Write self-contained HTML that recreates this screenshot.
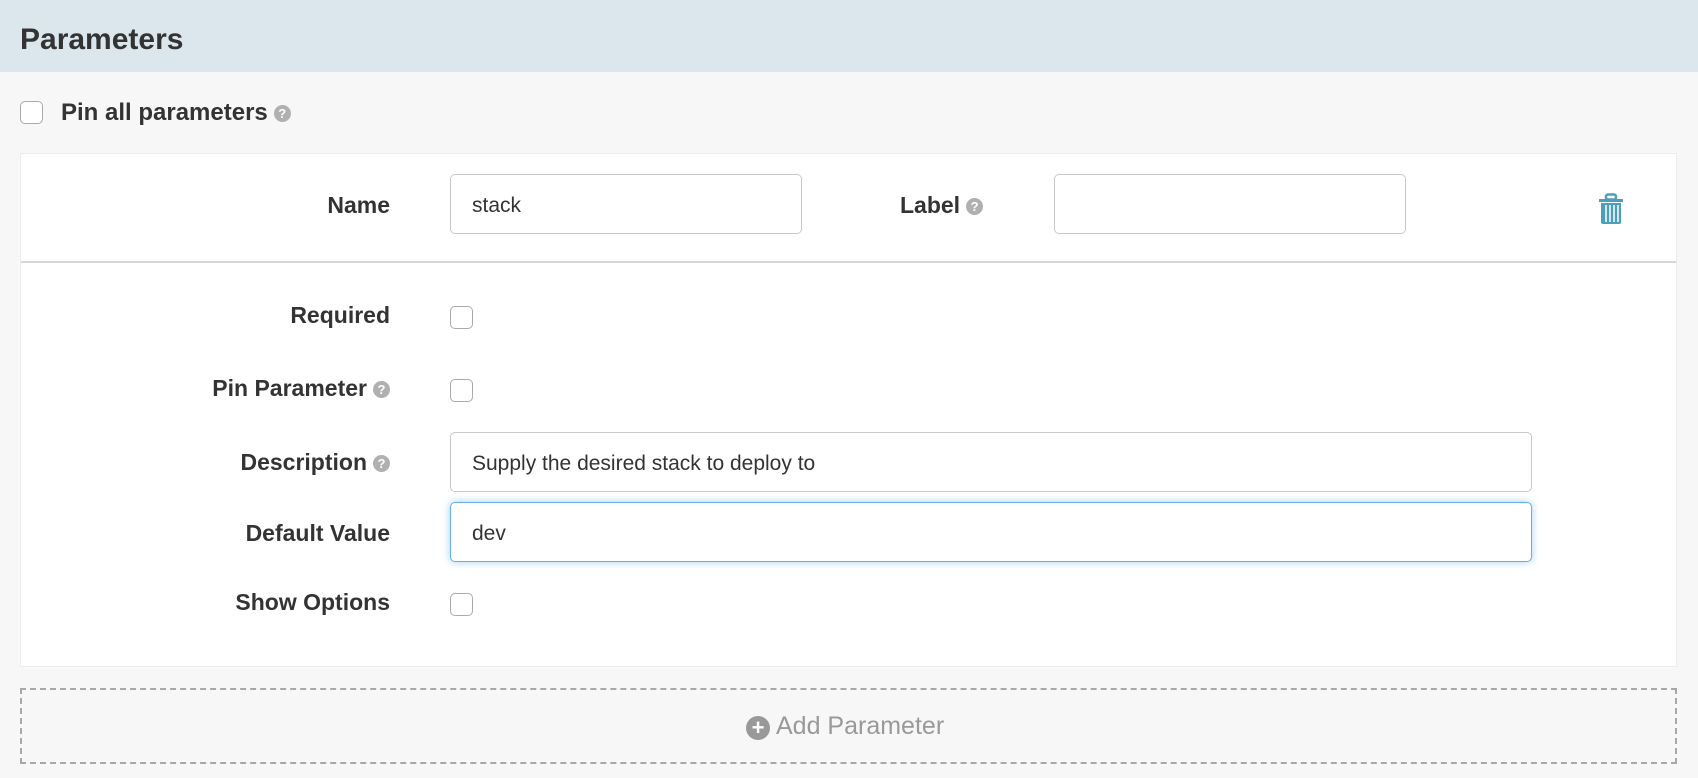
<!DOCTYPE html>
<html><head><meta charset="utf-8"><style>
*{box-sizing:border-box;margin:0;padding:0}
body{width:1698px;height:778px;background:#f7f7f7;font-family:"Liberation Sans",sans-serif;color:#333;position:relative;overflow:hidden}
.abs{position:absolute}
.hdr{left:0;top:0;width:1698px;height:72px;background:#dbe7ed}
.title{left:20px;top:22px;font-size:30px;line-height:36px;color:#333;font-weight:bold}
.cb{position:absolute;width:23px;height:23px;border:1.5px solid #aaa;border-radius:5px;background:#fff}
.lbl{position:absolute;font-weight:bold;font-size:23px;line-height:28px;color:#333;white-space:nowrap}
.r{right:calc(1698px - 390px);text-align:right}
.help{display:inline-block;width:17px;height:17px;border-radius:50%;background:#b0b0b0;color:#fff;font-size:13px;line-height:17px;text-align:center;vertical-align:2px;margin-left:6px;font-weight:bold}
.panel{left:20px;top:153px;width:1657px;height:514px;background:#fff;border:1.5px solid #ececec}
.div{left:21px;top:261px;width:1655px;height:2px;background:#d6d6d6}
.inp{position:absolute;background:#fff;border:1.5px solid #c8c8c8;border-radius:5px;font-size:21px;line-height:62px;padding-left:21px;color:#333}
.dash{left:20px;top:688px;width:1657px;height:76px;border:2px dashed #a8a8a8}
</style></head><body>
<div class="abs hdr"></div>
<div class="abs title">Parameters</div>
<div class="cb" style="left:20px;top:101px"></div>
<div class="lbl" style="left:61px;top:99px;font-size:24px">Pin all parameters<span class="help">?</span></div>
<div class="abs panel"></div>
<div class="abs div"></div>
<div class="lbl r" style="top:191px">Name</div>
<div class="inp" style="left:450px;top:174px;width:352px;height:60px">stack</div>
<div class="lbl" style="left:900px;top:191px">Label<span class="help">?</span></div>
<div class="inp" style="left:1054px;top:174px;width:352px;height:60px"></div>
<svg class="abs" style="left:1598px;top:193px" width="26" height="32" viewBox="0 0 26 32"><rect x="8" y="1.5" width="10" height="5" rx="2" fill="none" stroke="#4a9fba" stroke-width="2.5"/><rect x="1" y="6" width="24" height="3" fill="#4a9fba"/><path d="M3 10h20v19a2 2 0 0 1-2 2H5a2 2 0 0 1-2-2z" fill="#4a9fba"/><path d="M8 12v17M12 12v17M16 12v17M20 12v17" stroke="#fff" stroke-width="1.5"/></svg>
<div class="lbl r" style="top:301px">Required</div>
<div class="cb" style="left:450px;top:306px"></div>
<div class="lbl r" style="top:374px">Pin Parameter<span class="help">?</span></div>
<div class="cb" style="left:450px;top:379px"></div>
<div class="lbl r" style="top:448px">Description<span class="help">?</span></div>
<div class="inp" style="left:450px;top:432px;width:1082px;height:60px">Supply the desired stack to deploy to</div>
<div class="lbl r" style="top:519px">Default Value</div>
<div class="inp" style="left:450px;top:502px;width:1082px;height:60px;border-color:#66afe9;box-shadow:0 0 8px rgba(102,175,233,.6)">dev</div>
<div class="lbl r" style="top:588px">Show Options</div>
<div class="cb" style="left:450px;top:593px"></div>
<div class="abs dash"></div>
<div class="abs" style="left:746px;top:711px;font-size:25px;line-height:30px;color:#999;white-space:nowrap"><span style="display:inline-block;width:24px;height:24px;border-radius:50%;background:#999;color:#fff;text-align:center;line-height:24px;font-weight:bold;font-size:22px;vertical-align:-1px;margin-right:6px">+</span>Add Parameter</div>
</body></html>
